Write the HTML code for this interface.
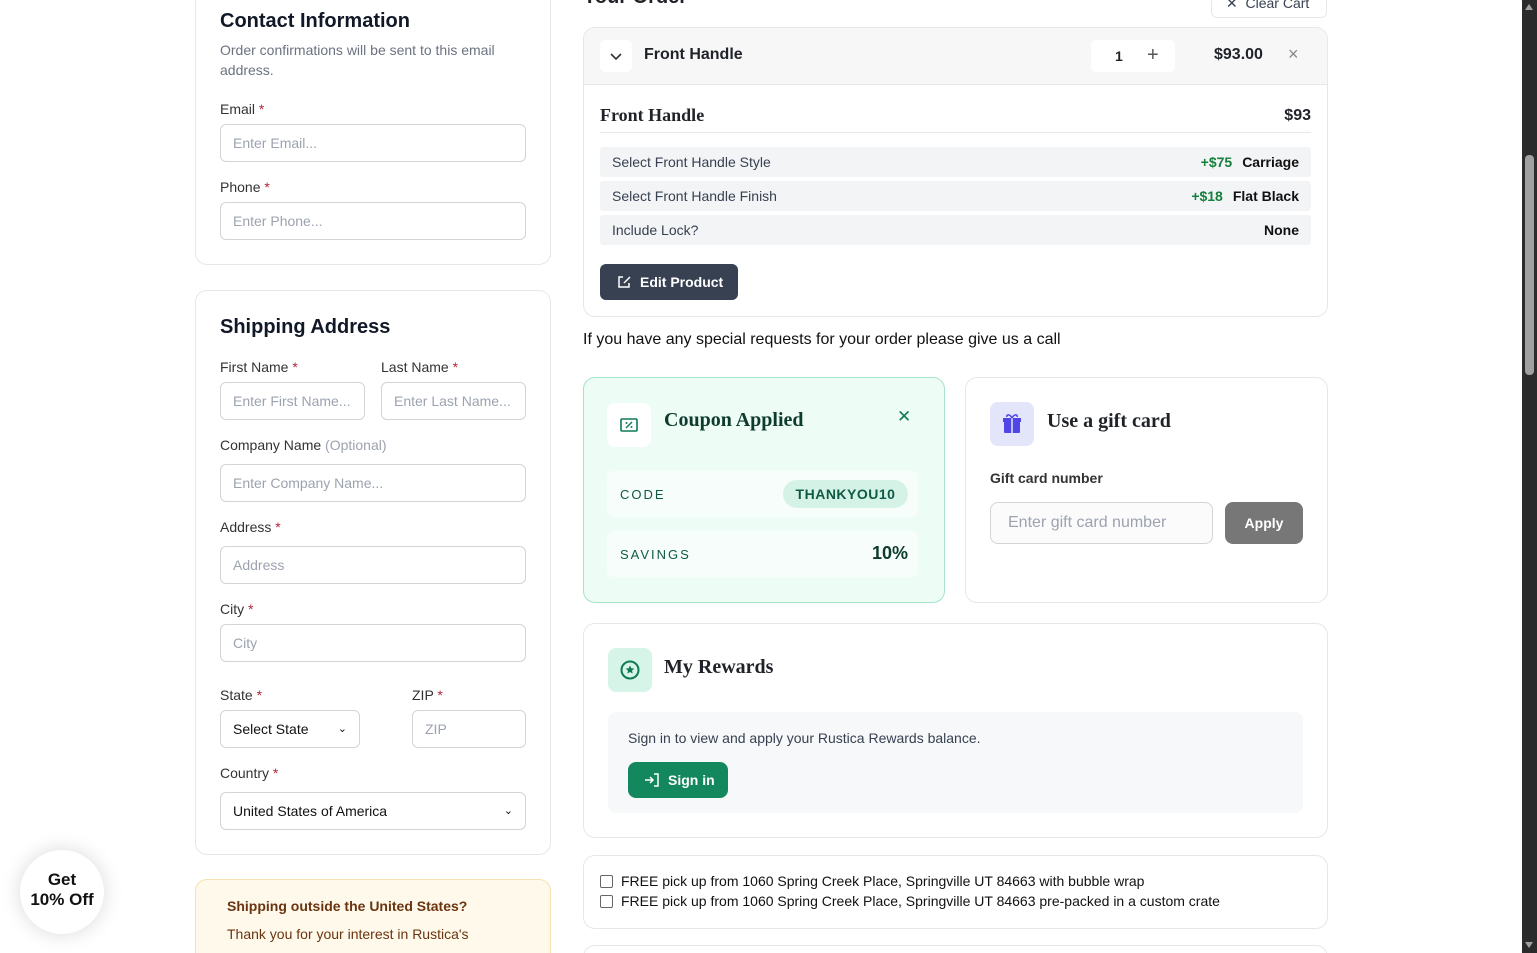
<!DOCTYPE html>
<html><head><meta charset="utf-8"><style>
*{box-sizing:border-box;margin:0;padding:0}
html,body{width:1537px;height:953px;overflow:hidden}
body{background:#fff;font-family:"Liberation Sans",sans-serif;color:#1f2328}
#w{position:relative;width:1537px;height:953px;overflow:hidden}
.a{position:absolute}
.card{position:absolute;border:1px solid #e5e7eb;border-radius:12px;background:#fff}
.lbl{position:absolute;font-size:14px;color:#333}
.lbl b{color:#b4233a;font-weight:normal}
.inp{position:absolute;height:38px;border:1px solid #d4d4d8;border-radius:6px;font-size:14px;color:#9ca3af;padding:0 12px;line-height:36px;background:#fff}
.h2{position:absolute;font-size:20px;font-weight:bold;color:#111827}
.serif{font-family:"Liberation Serif",serif;font-weight:bold}
.row{position:absolute;left:16px;right:16px;height:30px;background:#f3f4f6;border-radius:3px;font-size:14px;color:#374151;padding:0 12px;line-height:30px}
.row span.r{float:right;font-weight:bold;color:#111}
.row span.g{color:#15803d;margin-right:10px}
</style></head><body><div id="w">

<div class="card" style="left:195px;top:-20px;width:356px;height:285px"></div>
<div class="h2" style="left:220px;top:10px">Contact Information</div>
<div class="a" style="left:220px;top:40px;width:300px;font-size:14px;line-height:20px;color:#6b7280">Order confirmations will be sent to this email address.</div>
<div class="lbl" style="left:220px;top:101px">Email <b>*</b></div>
<div class="inp" style="left:220px;top:124px;width:306px">Enter Email...</div>
<div class="lbl" style="left:220px;top:179px">Phone <b>*</b></div>
<div class="inp" style="left:220px;top:202px;width:306px">Enter Phone...</div>

<div class="card" style="left:195px;top:290px;width:356px;height:565px"></div>
<div class="h2" style="left:220px;top:316px">Shipping Address</div>
<div class="lbl" style="left:220px;top:359px">First Name <b>*</b></div>
<div class="lbl" style="left:381px;top:359px">Last Name <b>*</b></div>
<div class="inp" style="left:220px;top:382px;width:145px">Enter First Name...</div>
<div class="inp" style="left:381px;top:382px;width:145px">Enter Last Name...</div>
<div class="lbl" style="left:220px;top:437px">Company Name <span style="color:#9ca3af">(Optional)</span></div>
<div class="inp" style="left:220px;top:464px;width:306px">Enter Company Name...</div>
<div class="lbl" style="left:220px;top:519px">Address <b>*</b></div>
<div class="inp" style="left:220px;top:546px;width:306px">Address</div>
<div class="lbl" style="left:220px;top:601px">City <b>*</b></div>
<div class="inp" style="left:220px;top:624px;width:306px">City</div>
<div class="lbl" style="left:220px;top:687px">State <b>*</b></div>
<div class="lbl" style="left:412px;top:687px">ZIP <b>*</b></div>
<div class="inp" style="left:220px;top:710px;width:140px;color:#111">Select State<span style="position:absolute;right:12px;font-size:11px">⌄</span></div>
<div class="inp" style="left:412px;top:710px;width:114px">ZIP</div>
<div class="lbl" style="left:220px;top:765px">Country <b>*</b></div>
<div class="inp" style="left:220px;top:792px;width:306px;color:#111">United States of America<span style="position:absolute;right:12px;font-size:11px">⌄</span></div>

<div class="a" style="left:195px;top:879px;width:356px;height:100px;background:#fef9ea;border:1px solid #f5e2b0;border-radius:12px"></div>
<div class="a" style="left:227px;top:898px;font-size:14px;font-weight:bold;color:#6b3410">Shipping outside the United States?</div>
<div class="a" style="left:227px;top:926px;font-size:14px;color:#6b3410">Thank you for your interest in Rustica's</div>

<div class="a" style="left:20px;top:850px;width:84px;height:84px;border-radius:50%;background:#fff;box-shadow:0 0 20px rgba(0,0,0,.15);text-align:center;font-weight:bold;font-size:17px;line-height:20px;padding-top:20px;color:#111">Get<br>10% Off</div>

<div class="a" style="left:583px;top:-14px;font-size:20px;font-weight:bold">Your Order</div>
<div class="a" style="left:1211px;top:-12px;width:116px;height:30px;border:1px solid #e5e7eb;border-radius:6px;font-size:14px;color:#374151;padding:6px 0 0 14px">✕ &nbsp;Clear Cart</div>

<div class="card" style="left:583px;top:27px;width:745px;height:290px;overflow:hidden">
 <div class="a" style="left:0;top:0;width:100%;height:57px;background:#f7f7f8;border-bottom:1px solid #e5e7eb"></div>
 <div class="a" style="left:16px;top:12px;width:32px;height:32px;background:#fff;border-radius:6px">
  <svg width="14" height="14" viewBox="0 0 14 14" style="position:absolute;left:9px;top:9px"><path d="M2 5l5 5 5-5" fill="none" stroke="#333" stroke-width="1.6"/></svg></div>
 <div class="a" style="left:60px;top:18px;font-size:16px;font-weight:bold">Front Handle</div>
 <div class="a" style="left:507px;top:12px;width:84px;height:32px;background:#fff;border-radius:6px;font-size:14px"><span style="position:absolute;left:24px;top:8px;font-weight:bold">1</span><span style="position:absolute;left:56px;top:4px;font-size:20px;color:#555">+</span></div>
 <div class="a" style="left:630px;top:18px;font-size:16px;font-weight:bold">$93.00</div>
 <div class="a" style="left:704px;top:16px;font-size:18px;color:#888">×</div>
 <div class="a serif" style="left:16px;top:77px;font-size:18px">Front Handle</div>
 <div class="a" style="right:16px;top:79px;font-size:16px;font-weight:bold">$93</div>
 <div class="a" style="left:16px;right:16px;top:104px;border-top:1px solid #e5e7eb"></div>
 <div class="row" style="top:119px">Select Front Handle Style<span class="r">Carriage</span><span class="g" style="float:right;font-weight:bold">+$75</span></div>
 <div class="row" style="top:153px">Select Front Handle Finish<span class="r">Flat Black</span><span class="g" style="float:right;font-weight:bold">+$18</span></div>
 <div class="row" style="top:187px">Include Lock?<span class="r">None</span></div>
 <div class="a" style="left:16px;top:236px;width:138px;height:36px;background:#374151;border-radius:6px;color:#fff;font-size:14px;font-weight:bold;line-height:36px;padding-left:40px">Edit Product
  <svg class="a" style="left:17px;top:11px" width="14" height="14" viewBox="0 0 14 14"><path d="M6 2H2v10h10V8M7 8l6-6" fill="none" stroke="#fff" stroke-width="1.5"/></svg></div>
</div>

<div class="a" style="left:583px;top:331px;font-size:16px;color:#111">If you have any special requests for your order please give us a call</div>

<div class="a" style="left:583px;top:377px;width:362px;height:226px;background:#eefcf6;border:1px solid #a7e3c9;border-radius:12px"></div>
<div class="a" style="left:607px;top:403px;width:44px;height:44px;background:#fff;border-radius:8px">
 <svg class="a" style="left:13px;top:14px" width="18" height="16" viewBox="0 0 18 16"><rect x="1" y="2" width="16" height="12" rx="1" fill="none" stroke="#0f7a55" stroke-width="1.6"/><path d="M6 11l6-6" stroke="#0f7a55" stroke-width="1.4"/><circle cx="6.5" cy="6" r="1" fill="#0f7a55"/><circle cx="11.5" cy="10" r="1" fill="#0f7a55"/></svg></div>
<div class="a serif" style="left:664px;top:409px;font-size:20px;color:#0d3b2e">Coupon Applied</div>
<div class="a" style="left:897px;top:407px;font-size:17px;color:#0f7a55">✕</div>
<div class="a" style="left:607px;top:471px;width:311px;height:46px;background:#f6fdfa;border-radius:6px"></div>
<div class="a" style="left:620px;top:487px;font-size:13px;letter-spacing:2px;color:#0f5a45">CODE</div>
<div class="a" style="left:783px;top:480px;width:125px;height:28px;background:#d5f2e6;border-radius:14px;text-align:center;line-height:28px;font-size:14px;font-weight:bold;color:#0f5a45;letter-spacing:.5px">THANKYOU10</div>
<div class="a" style="left:607px;top:531px;width:311px;height:46px;background:#f6fdfa;border-radius:6px"></div>
<div class="a" style="left:620px;top:547px;font-size:13px;letter-spacing:2px;color:#0f5a45">SAVINGS</div>
<div class="a" style="left:872px;top:543px;font-size:18px;font-weight:bold;color:#0d3b2e">10%</div>

<div class="card" style="left:965px;top:377px;width:363px;height:226px"></div>
<div class="a" style="left:990px;top:402px;width:44px;height:44px;background:#e3e5fb;border-radius:8px">
 <svg class="a" style="left:12px;top:11px" width="20" height="21" viewBox="0 0 20 21"><rect x="2" y="8" width="16" height="12" rx="1" fill="#4f46e5"/><rect x="1" y="5" width="18" height="4" fill="#4f46e5"/><path d="M10 5v15" stroke="#e3e5fb" stroke-width="1.5"/><path d="M10 5C8 1 4 1 5 4M10 5c2-4 6-4 5-1" fill="none" stroke="#4f46e5" stroke-width="1.5"/></svg></div>
<div class="a serif" style="left:1047px;top:410px;font-size:20px">Use a gift card</div>
<div class="a" style="left:990px;top:470px;font-size:14px;font-weight:bold;color:#333">Gift card number</div>
<div class="a" style="left:990px;top:502px;width:223px;height:42px;border:1px solid #d4d4d8;border-radius:8px;background:#fbfbfc;font-size:16px;color:#9ca3af;padding:11px 0 0 17px">Enter gift card number</div>
<div class="a" style="left:1225px;top:502px;width:78px;height:42px;background:#777;border-radius:8px;color:#fff;font-size:14px;font-weight:bold;text-align:center;line-height:42px">Apply</div>

<div class="card" style="left:583px;top:623px;width:745px;height:215px"></div>
<div class="a" style="left:608px;top:648px;width:44px;height:44px;background:#d6f5e8;border-radius:8px">
 <svg class="a" style="left:12px;top:12px" width="20" height="20" viewBox="0 0 20 20"><circle cx="10" cy="10" r="8.5" fill="none" stroke="#0f7a55" stroke-width="2"/><path d="M10 5.5l1.3 2.8 3 .3-2.3 2 .7 3L10 12l-2.7 1.6.7-3-2.3-2 3-.3z" fill="#0f7a55"/></svg></div>
<div class="a serif" style="left:664px;top:656px;font-size:20px">My Rewards</div>
<div class="a" style="left:608px;top:712px;width:695px;height:101px;background:#f7f8f9;border-radius:8px"></div>
<div class="a" style="left:628px;top:730px;font-size:14px;color:#374151">Sign in to view and apply your Rustica Rewards balance.</div>
<div class="a" style="left:628px;top:762px;width:100px;height:36px;background:#13885f;border-radius:8px;color:#fff;font-size:14px;font-weight:bold;line-height:36px;padding-left:40px">Sign in
 <svg class="a" style="left:16px;top:11px" width="16" height="14" viewBox="0 0 16 14"><path d="M1 7h8M6 4l3 3-3 3M10 1h4v12h-4" fill="none" stroke="#fff" stroke-width="1.5"/></svg></div>

<div class="card" style="left:583px;top:855px;width:745px;height:74px"></div>
<div class="a" style="left:600px;top:871px;font-size:14px;color:#111;line-height:20px">
 <div><span style="display:inline-block;width:13px;height:13px;border:1px solid #666;border-radius:2px;vertical-align:-2px;margin-right:8px"></span>FREE pick up from 1060 Spring Creek Place, Springville UT 84663 with bubble wrap</div>
 <div><span style="display:inline-block;width:13px;height:13px;border:1px solid #666;border-radius:2px;vertical-align:-2px;margin-right:8px"></span>FREE pick up from 1060 Spring Creek Place, Springville UT 84663 pre-packed in a custom crate</div>
</div>
<div class="card" style="left:583px;top:945px;width:745px;height:40px"></div>

<div class="a" style="left:1522px;top:0;width:15px;height:953px;background:#2b2b2b"></div>
<div class="a" style="left:1525px;top:155px;width:9px;height:220px;background:#a0a0a0;border-radius:4px"></div>
<div class="a" style="left:1525px;top:4px;width:0;height:0;border-left:4.5px solid transparent;border-right:4.5px solid transparent;border-bottom:6px solid #a0a0a0"></div>
<div class="a" style="left:1525px;top:942px;width:0;height:0;border-left:4.5px solid transparent;border-right:4.5px solid transparent;border-top:6px solid #a0a0a0"></div>
</div></body></html>
